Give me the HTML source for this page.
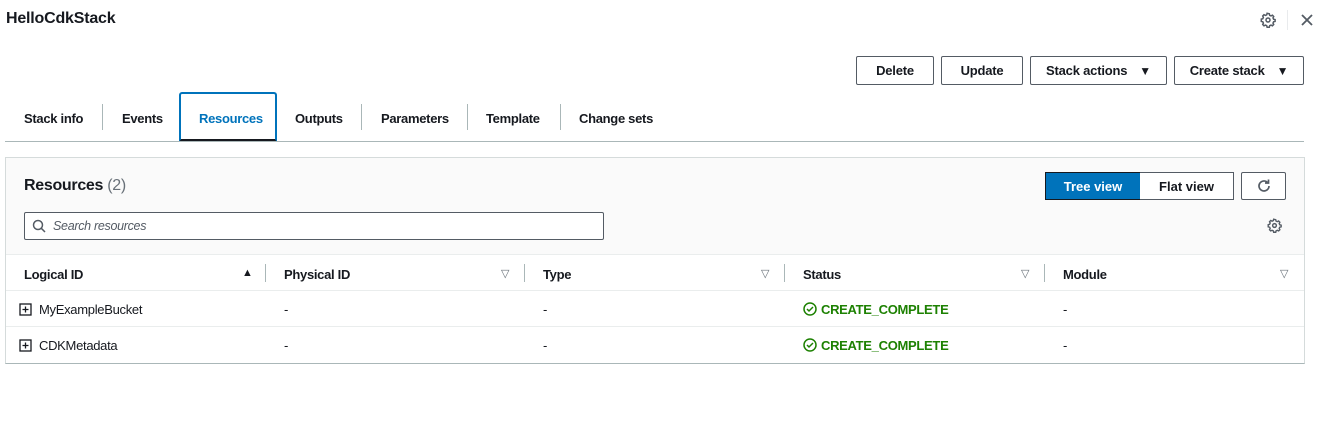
<!DOCTYPE html>
<html><head><meta charset="utf-8"><style>
*{box-sizing:border-box;margin:0;padding:0}
body{width:1320px;height:441px;background:#fff;font-family:"Liberation Sans",sans-serif;color:#16191f;position:relative;overflow:hidden}
.a{position:absolute;white-space:nowrap}
.b{font-weight:bold}
.btn{position:absolute;border:1px solid #545b64;border-radius:2px;background:#fff;font-weight:bold;font-size:13px;letter-spacing:-0.2px;color:#16191f;display:flex;align-items:center;justify-content:center;gap:12px}
.tab{position:absolute;top:111px;font-weight:bold;font-size:13px;letter-spacing:-0.3px;color:#16191f}
.sep{position:absolute;width:1px;background:#aab7b8}
.th{position:absolute;top:267px;font-weight:bold;font-size:13px;letter-spacing:-0.3px}
.td{position:absolute;font-size:13px;letter-spacing:-0.3px}
.ok{color:#1d8102;font-weight:bold}
.tri{font-size:11px;color:#687078}
</style></head><body>
<div class="a b" style="left:6px;top:10px;font-size:16px;letter-spacing:-0.2px">HelloCdkStack</div>
<svg class="a" style="left:1260px;top:12px" width="16" height="16" viewBox="0 0 16 16"><path d="M8 1.5l1.3.3.4 1.5 1.3.6 1.4-.7 1.3 1.3-.7 1.4.6 1.3 1.5.4v1.8l-1.5.4-.6 1.3.7 1.4-1.3 1.3-1.4-.7-1.3.6-.4 1.5H7.1l-.4-1.5-1.3-.6-1.4.7-1.3-1.3.7-1.4-.6-1.3-1.5-.4V7.1l1.5-.4.6-1.3-.7-1.4 1.3-1.3 1.4.7 1.3-.6.4-1.5z" fill="none" stroke="#545b64" stroke-width="1.5"/><circle cx="8" cy="8" r="2" fill="none" stroke="#545b64" stroke-width="1.5"/></svg>
<div class="sep" style="left:1287px;top:10px;height:20px;background:#e9ebed"></div>
<svg class="a" style="left:1300px;top:13px" width="14" height="14" viewBox="0 0 14 14"><path d="M2 2l10 10M12 2L2 12" stroke="#545b64" stroke-width="1.8"/></svg>

<div class="btn" style="left:856px;top:56px;width:78px;height:29px">Delete</div>
<div class="btn" style="left:941px;top:56px;width:82px;height:29px">Update</div>
<div class="btn" style="left:1030px;top:56px;width:137px;height:29px">Stack actions <span style="font-size:12px">▼</span></div>
<div class="btn" style="left:1174px;top:56px;width:130px;height:29px">Create stack <span style="font-size:12px">▼</span></div>

<div class="tab" style="left:24px">Stack info</div>
<div class="sep" style="left:102px;top:104px;height:26px"></div>
<div class="tab" style="left:122px">Events</div>
<div class="a" style="left:179px;top:92px;width:98px;height:50px;border:2px solid #0073bb;border-bottom:3px solid #16191f;border-radius:3px 3px 0 0"></div>
<div class="tab" style="left:199px;color:#0073bb">Resources</div>
<div class="tab" style="left:295px">Outputs</div>
<div class="sep" style="left:361px;top:104px;height:26px"></div>
<div class="tab" style="left:381px">Parameters</div>
<div class="sep" style="left:467px;top:104px;height:26px"></div>
<div class="tab" style="left:486px">Template</div>
<div class="sep" style="left:560px;top:104px;height:26px"></div>
<div class="tab" style="left:579px">Change sets</div>
<div class="a" style="left:5px;top:141px;width:1299px;height:1px;background:#aab7b8"></div>

<div class="a" style="left:5px;top:157px;width:1300px;height:207px;border:1px solid #d5dbdb;border-bottom:1px solid #aab7b8;background:#fff"></div>
<div class="a" style="left:6px;top:158px;width:1298px;height:97px;background:#fafafa;border-bottom:1px solid #eaeded"></div>
<div class="a b" style="left:24px;top:177px;font-size:16px;letter-spacing:-0.3px">Resources <span style="font-weight:normal;color:#687078">(2)</span></div>
<div class="a" style="left:1045px;top:172px;width:96px;height:28px;background:#0073bb;border:1px solid #16191f;color:#fff;font-weight:bold;font-size:13px;display:flex;align-items:center;justify-content:center">Tree view</div>
<div class="a" style="left:1140px;top:172px;width:94px;height:28px;background:#fff;border:1px solid #545b64;border-left:none;font-weight:bold;font-size:13px;display:flex;align-items:center;justify-content:center">Flat view</div>
<div class="a" style="left:1241px;top:172px;width:45px;height:28px;background:#fff;border:1px solid #545b64;border-radius:2px"></div>
<svg class="a" style="left:1256px;top:178px" width="16" height="16" viewBox="0 0 16 16"><path d="M13 8a5 5 0 1 1-1.6-3.7" fill="none" stroke="#545b64" stroke-width="1.7"/><path d="M12.5 1.5v3.5H9" fill="none" stroke="#545b64" stroke-width="1.7"/></svg>
<div class="a" style="left:24px;top:212px;width:580px;height:28px;border:1px solid #545b64;border-radius:2px;background:#fff"></div>
<svg class="a" style="left:32px;top:219px" width="14" height="14" viewBox="0 0 14 14"><circle cx="6" cy="6" r="4.5" fill="none" stroke="#545b64" stroke-width="1.5"/><path d="M9.3 9.3L13 13" stroke="#545b64" stroke-width="1.5"/></svg>
<div class="a" style="left:53px;top:219px;font-size:12.5px;font-style:italic;color:#545b64;letter-spacing:-0.3px">Search resources</div>
<svg class="a" style="left:1267px;top:218px" width="15" height="15" viewBox="0 0 16 16"><path d="M8 1.5l1.3.3.4 1.5 1.3.6 1.4-.7 1.3 1.3-.7 1.4.6 1.3 1.5.4v1.8l-1.5.4-.6 1.3.7 1.4-1.3 1.3-1.4-.7-1.3.6-.4 1.5H7.1l-.4-1.5-1.3-.6-1.4.7-1.3-1.3.7-1.4-.6-1.3-1.5-.4V7.1l1.5-.4.6-1.3-.7-1.4 1.3-1.3 1.4.7 1.3-.6.4-1.5z" fill="none" stroke="#545b64" stroke-width="1.5"/><circle cx="8" cy="8" r="2" fill="none" stroke="#545b64" stroke-width="1.5"/></svg>

<div class="th" style="left:24px">Logical ID</div>
<div class="a" style="left:242px;top:267px;font-size:11px">▲</div>
<div class="sep" style="left:265px;top:264px;height:18px"></div>
<div class="th" style="left:284px">Physical ID</div>
<div class="a tri" style="left:501px;top:267px">▽</div>
<div class="sep" style="left:524px;top:264px;height:18px"></div>
<div class="th" style="left:543px">Type</div>
<div class="a tri" style="left:761px;top:267px">▽</div>
<div class="sep" style="left:784px;top:264px;height:18px"></div>
<div class="th" style="left:803px">Status</div>
<div class="a tri" style="left:1021px;top:267px">▽</div>
<div class="sep" style="left:1044px;top:264px;height:18px"></div>
<div class="th" style="left:1063px">Module</div>
<div class="a tri" style="left:1280px;top:267px">▽</div>
<div class="a" style="left:6px;top:290px;width:1298px;height:1px;background:#eaeded"></div>
<div class="a" style="left:6px;top:326px;width:1298px;height:1px;background:#eaeded"></div>

<svg class="a" style="left:19px;top:303px" width="13" height="13" viewBox="0 0 13 13"><rect x="1" y="1" width="11" height="11" fill="none" stroke="#16191f" stroke-width="1.3"/><path d="M6.5 3.5v6M3.5 6.5h6" stroke="#16191f" stroke-width="1.3"/></svg>
<div class="td" style="left:39px;top:302px">MyExampleBucket</div>
<div class="td" style="left:284px;top:302px">-</div>
<div class="td" style="left:543px;top:302px">-</div>
<svg class="a" style="left:803px;top:302px" width="14" height="14" viewBox="0 0 14 14"><circle cx="7" cy="7" r="6" fill="none" stroke="#1d8102" stroke-width="1.5"/><path d="M4 7l2 2 4-4" fill="none" stroke="#1d8102" stroke-width="1.5"/></svg>
<div class="td ok" style="left:821px;top:302px">CREATE_COMPLETE</div>
<div class="td" style="left:1063px;top:302px">-</div>

<svg class="a" style="left:19px;top:339px" width="13" height="13" viewBox="0 0 13 13"><rect x="1" y="1" width="11" height="11" fill="none" stroke="#16191f" stroke-width="1.3"/><path d="M6.5 3.5v6M3.5 6.5h6" stroke="#16191f" stroke-width="1.3"/></svg>
<div class="td" style="left:39px;top:338px">CDKMetadata</div>
<div class="td" style="left:284px;top:338px">-</div>
<div class="td" style="left:543px;top:338px">-</div>
<svg class="a" style="left:803px;top:338px" width="14" height="14" viewBox="0 0 14 14"><circle cx="7" cy="7" r="6" fill="none" stroke="#1d8102" stroke-width="1.5"/><path d="M4 7l2 2 4-4" fill="none" stroke="#1d8102" stroke-width="1.5"/></svg>
<div class="td ok" style="left:821px;top:338px">CREATE_COMPLETE</div>
<div class="td" style="left:1063px;top:338px">-</div>
</body></html>
